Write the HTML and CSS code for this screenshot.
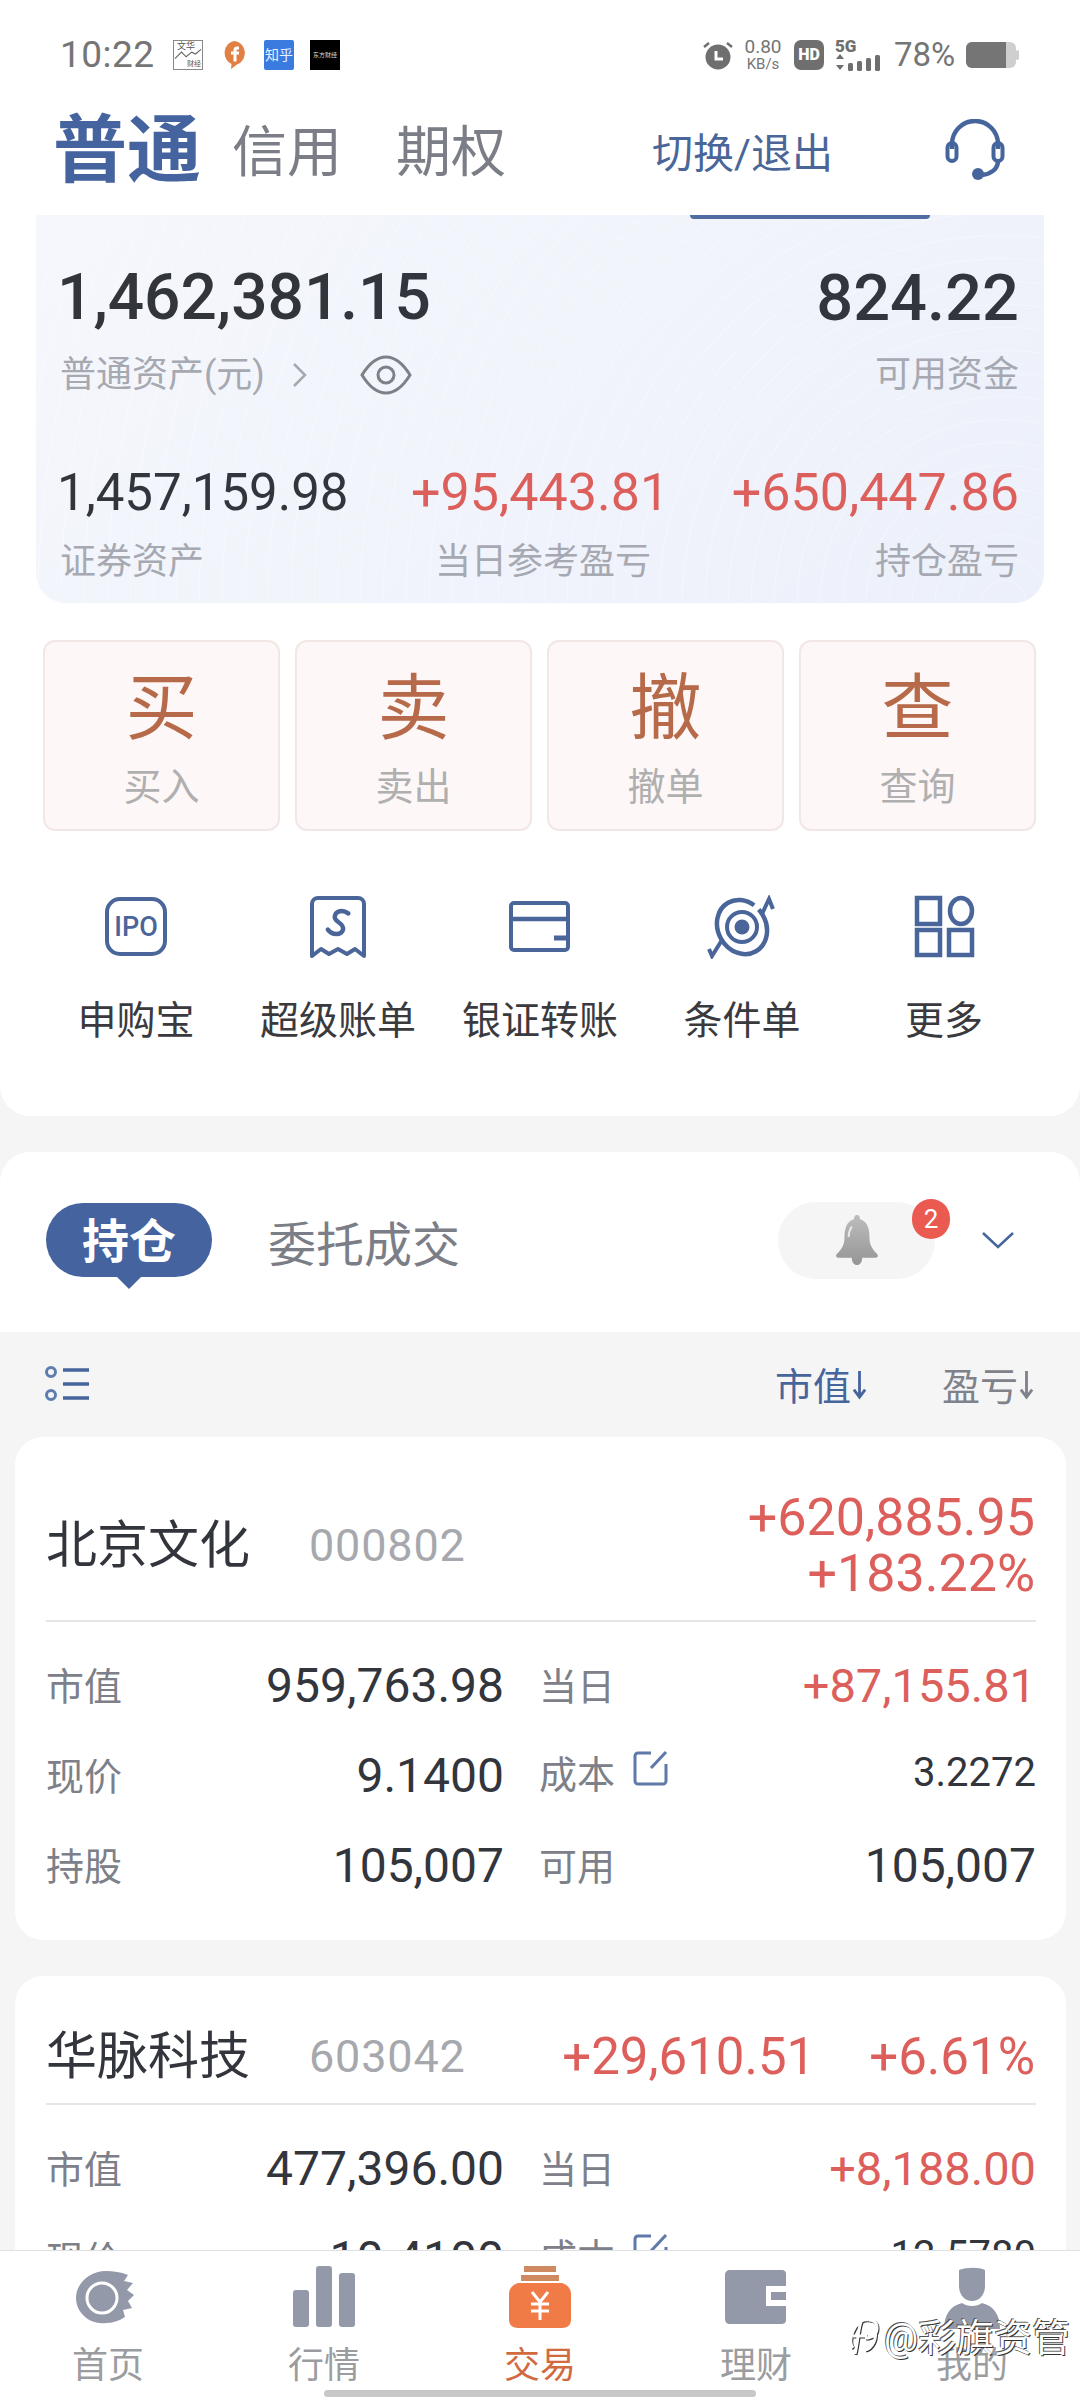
FILE: index.html
```html
<!DOCTYPE html>
<html lang="zh-CN">
<head>
<meta charset="utf-8">
<title>交易</title>
<link rel="stylesheet" href="styles.css">
</head>
<body>
<div class="app">
  <main class="content">
    <section class="top-panel">
      <div class="statusbar">
        <div class="status-left">
          <span class="time">10:22</span>
          <span class="app-ico ico-wh"><span>文华</span><svg viewBox="0 0 30 12" class="wh-line"><path d="M1 11 8 4l5 5 6-5 4 2 6-5" fill="none" stroke="#666" stroke-width="1.2"/></svg><span class="wh-sub">财经</span></span>
          <svg class="app-f" viewBox="0 0 24 30"><path d="M12 1a11 12 0 0 1 3 23.500L9 29l.5-5A11 12 0 0 1 12 1z" fill="#e08044"/><path d="M15.500 6.500c-3 0-4 1.500-4 4v1H9v3h2.500v7h3v-7h2.500v-3h-2.500v-1c0-.8.300-1 1-1h1.500v-3z" fill="#fff"/></svg>
          <span class="app-ico ico-zh">知乎</span>
          <span class="app-ico ico-bk">东方财经</span>
        </div>
        <div class="status-right">
          <svg class="s-alarm" viewBox="0 0 32 30"><circle cx="16" cy="17" r="12.500" fill="#6f6f6f"/><path d="M14 11v8h7" fill="none" stroke="#fff" stroke-width="3"/><path d="M2 7l5-4M30 7l-5-4" stroke="#6f6f6f" stroke-width="2.500"/></svg>
          <span class="s-speed"><span>0.80</span><span>KB/s</span></span>
          <span class="s-hd">HD</span>
          <span class="s-net">
            <span class="s-5g">5G</span>
            <svg viewBox="0 0 50 18" class="s-bars"><path d="M5 1l4 5H1zM5 17l4-5H1z" fill="#6f6f6f"/><rect x="13" y="10" width="5" height="8" rx="1.500" fill="#6f6f6f"/><rect x="22" y="8" width="5" height="10" rx="1.500" fill="#6f6f6f"/><rect x="31" y="5" width="5" height="13" rx="1.500" fill="#6f6f6f"/><rect x="40" y="2" width="5" height="16" rx="1.500" fill="#6f6f6f"/></svg>
          </span>
          <span class="s-batt-text">78%</span>
          <svg class="s-batt" viewBox="0 0 54 28"><rect x="0" y="1" width="50" height="26" rx="6" fill="#cfcfcf"/><path d="M6 1h34v26H6a6 6 0 0 1-6-6V7a6 6 0 0 1 6-6z" fill="#757575"/><rect x="50" y="9" width="3" height="10" rx="1.500" fill="#cfcfcf"/></svg>
        </div>
      </div>

      <header class="account-head">
        <span class="acct-active">普通</span>
        <span class="acct-tab acct-credit">信用</span>
        <span class="acct-tab acct-option">期权</span>
        <span class="acct-switch">切换/退出</span>
        <svg class="headset" viewBox="0 0 60 62"><path d="M7 30V25a23 23 0 0 1 46 0v5" fill="none" stroke="#47659d" stroke-width="4.500"/><rect x="2.500" y="24" width="9" height="18" rx="4.500" fill="none" stroke="#47659d" stroke-width="4"/><rect x="48.500" y="24" width="9" height="18" rx="4.500" fill="none" stroke="#47659d" stroke-width="4"/><path d="M53 42c0 8-7 13-16 14" fill="none" stroke="#47659d" stroke-width="4.500"/><circle cx="33" cy="55" r="6" fill="#47659d"/></svg>
      </header>

      <section class="assets">
        <div class="assets-strip"></div>
        <div class="assets-main">
          <div class="stack">
            <div class="num-xl num-flush">1,462,381.15</div>
            <div class="asset-label asset-link">
              <span>普通资产(元)</span>
              <svg class="chev" viewBox="0 0 18 26"><path d="M3 2l11 11L3 24" fill="none" stroke="#a5a8af" stroke-width="2.500"/></svg>
              <svg class="eye" viewBox="0 0 52 40"><path d="M2 20C10 7 18 2 26 2s16 5 24 18c-8 13-16 18-24 18S10 33 2 20z" fill="none" stroke="#7d8087" stroke-width="3"/><circle cx="26" cy="20" r="8" fill="none" stroke="#7d8087" stroke-width="3"/></svg>
            </div>
          </div>
          <div class="stack stack-end">
            <div class="num-xl num-cash">824.22</div>
            <div class="asset-label">可用资金</div>
          </div>
        </div>
        <div class="assets-sub">
          <div class="stack">
            <div class="num-lg num-dark num-flush">1,457,159.98</div>
            <div class="asset-label">证券资产</div>
          </div>
          <div class="stack stack-center">
            <div class="num-lg up">+95,443.81</div>
            <div class="asset-label label-nudge">当日参考盈亏</div>
          </div>
          <div class="stack stack-end">
            <div class="num-lg up">+650,447.86</div>
            <div class="asset-label">持仓盈亏</div>
          </div>
        </div>
      </section>

      <section class="trade-grid">
        <div class="trade-btn"><span class="trade-big">买</span><span class="trade-sub">买入</span></div>
        <div class="trade-btn"><span class="trade-big">卖</span><span class="trade-sub">卖出</span></div>
        <div class="trade-btn"><span class="trade-big">撤</span><span class="trade-sub">撤单</span></div>
        <div class="trade-btn"><span class="trade-big">查</span><span class="trade-sub">查询</span></div>
      </section>

      <nav class="quick">
        <div class="quick-item">
          <svg class="quick-ico" viewBox="0 0 80 64"><rect x="11" y="4" width="58" height="55" rx="13" fill="none" stroke="#4a6599" stroke-width="4"/><text x="40" y="41" class="ipo-text" text-anchor="middle">IPO</text></svg>
          <span>申购宝</span>
        </div>
        <div class="quick-item">
          <svg class="quick-ico" viewBox="0 0 80 64"><path d="M14 61V9a6 6 0 0 1 6-6h40a6 6 0 0 1 6 6v52l-9-7-8 5-9-5-9 5-8-5z" fill="none" stroke="#4a6599" stroke-width="4" stroke-linejoin="round"/><path d="M49 17c-6-3-13-1-13 5 0 6 11 5 10 12-1 6-10 7-15 2" transform="rotate(8 40 27)" fill="none" stroke="#4a6599" stroke-width="4.500" stroke-linecap="round"/></svg>
          <span>超级账单</span>
        </div>
        <div class="quick-item">
          <svg class="quick-ico" viewBox="0 0 80 64"><rect x="11" y="8" width="57" height="47" rx="3" fill="none" stroke="#4a6599" stroke-width="4"/><path d="M11 24h57" stroke="#4a6599" stroke-width="4.500"/><path d="M54 43h14" stroke="#4a6599" stroke-width="5"/></svg>
          <span>银证转账</span>
        </div>
        <div class="quick-item">
          <svg class="quick-ico" viewBox="0 0 80 64"><ellipse cx="40" cy="32" rx="24" ry="28" fill="none" stroke="#4a6599" stroke-width="4.500" stroke-dasharray="150 6" transform="rotate(-30 40 32)"/><circle cx="40" cy="32" r="15" fill="none" stroke="#4a6599" stroke-width="4"/><circle cx="40" cy="32" r="7.500" fill="#4a6599"/><path d="M60 19l7-15 4 10M20 45L10 61l-3-7" fill="none" stroke="#4a6599" stroke-width="4"/></svg>
          <span>条件单</span>
        </div>
        <div class="quick-item">
          <svg class="quick-ico" viewBox="0 0 80 64"><rect x="13" y="3" width="23" height="26" fill="none" stroke="#4a6599" stroke-width="4.500"/><ellipse cx="57" cy="16" rx="11" ry="13" fill="none" stroke="#4a6599" stroke-width="4.500"/><rect x="13" y="35" width="23" height="25" fill="none" stroke="#4a6599" stroke-width="4.500"/><rect x="45" y="35" width="23" height="25" fill="none" stroke="#4a6599" stroke-width="4.500"/></svg>
          <span>更多</span>
        </div>
      </nav>
    </section>

    <section class="tabs">
      <span class="tab-pill">持仓</span>
      <span class="tab-other">委托成交</span>
      <span class="bell-pill">
        <svg class="bell" viewBox="0 0 50 50"><defs><linearGradient id="bellg" x1="0" y1="0" x2="0" y2="1"><stop offset="0" stop-color="#bdbdbd"/><stop offset="1" stop-color="#959595"/></linearGradient></defs><path d="M25 1c2 0 3 2 3 4 7 2 9 9 9 17 0 7 2 11 7 16 2 2 1 4-1 4H30c0 4-2 7-5 7s-5-3-5-7H7c-2 0-3-2-1-4 5-5 7-9 7-16 0-8 2-15 9-17 0-2 1-4 3-4z" fill="url(#bellg)"/><path d="M20 12c-2 3-3 6-3 10" stroke="#e8e8e8" stroke-width="2" fill="none"/></svg>
        <span class="badge">2</span>
      </span>
      <svg class="tab-chev" viewBox="0 0 32 18"><path d="M1 2l15 14L31 2" fill="none" stroke="#47659d" stroke-width="2.500"/></svg>
    </section>

    <section class="list-head">
      <svg class="list-ico" viewBox="0 0 44 36"><circle cx="6" cy="6" r="4.500" fill="none" stroke="#5f7cb0" stroke-width="3"/><circle cx="6" cy="29" r="4.500" fill="none" stroke="#5f7cb0" stroke-width="3"/><path d="M18 4h26M18 18h26M18 32h26" stroke="#47659d" stroke-width="3.500"/></svg>
      <span class="sort sort-on">市值<svg class="sort-arrow" viewBox="0 0 16 34"><path d="M8 3v27M2 23l6 8 6-8" fill="none" stroke="#47659d" stroke-width="3"/></svg></span>
      <span class="sort sort-off">盈亏<svg class="sort-arrow" viewBox="0 0 16 34"><path d="M8 3v27M2 23l6 8 6-8" fill="none" stroke="#7f828a" stroke-width="3"/></svg></span>
    </section>

    <section class="cards">
      <article class="card">
        <div class="card-head">
          <span class="stock-name">北京文化</span>
          <span class="stock-code">000802</span>
          <div class="profit-stack up">
            <div>+620,885.95</div>
            <div>+183.22%</div>
          </div>
        </div>
        <div class="card-grid">
          <div class="cell"><span class="cell-label">市值</span><span class="cell-val">959,763.98</span></div>
          <div class="cell"><span class="cell-label">当日</span><span class="cell-val up">+87,155.81</span></div>
          <div class="cell"><span class="cell-label">现价</span><span class="cell-val">9.1400</span></div>
          <div class="cell"><span class="cell-label cell-edit">成本<svg class="edit" viewBox="0 0 36 36"><path d="M18 3H5a3 3 0 0 0-3 3v25a3 3 0 0 0 3 3h25a3 3 0 0 0 3-3V14" fill="none" stroke="#5f7aa8" stroke-width="3"/><path d="M18 18L33 2" stroke="#5f7aa8" stroke-width="3"/></svg></span><span class="cell-val cell-small">3.2272</span></div>
          <div class="cell"><span class="cell-label">持股</span><span class="cell-val">105,007</span></div>
          <div class="cell"><span class="cell-label">可用</span><span class="cell-val">105,007</span></div>
        </div>
      </article>

      <article class="card">
        <div class="card-head">
          <span class="stock-name">华脉科技</span>
          <span class="stock-code">603042</span>
          <div class="profit-row up">
            <span>+29,610.51</span>
            <span>+6.61%</span>
          </div>
        </div>
        <div class="card-grid">
          <div class="cell"><span class="cell-label">市值</span><span class="cell-val">477,396.00</span></div>
          <div class="cell"><span class="cell-label">当日</span><span class="cell-val up">+8,188.00</span></div>
          <div class="cell"><span class="cell-label">现价</span><span class="cell-val">10.4100</span></div>
          <div class="cell"><span class="cell-label cell-edit">成本<svg class="edit" viewBox="0 0 36 36"><path d="M18 3H5a3 3 0 0 0-3 3v25a3 3 0 0 0 3 3h25a3 3 0 0 0 3-3V14" fill="none" stroke="#5f7aa8" stroke-width="3"/><path d="M18 18L33 2" stroke="#5f7aa8" stroke-width="3"/></svg></span><span class="cell-val cell-small">12.5780</span></div>
        </div>
      </article>
    </section>
  </main>

  <nav class="tabbar">
    <div class="tabbar-item">
      <svg viewBox="0 0 80 64"><path d="M38 6c8 0 14 1 22 4l-4 6 9 2-6 7 7 5-6 6 4 7-9 2 2 7c-6 4-13 6-19 6C22 60 8 48 8 33S22 6 38 6z" fill="#9399a8"/><circle cx="34" cy="33" r="15" fill="none" stroke="#fff" stroke-width="3"/></svg>
      <span>首页</span>
    </div>
    <div class="tabbar-item">
      <svg viewBox="0 0 80 64"><rect x="9" y="25" width="16" height="37" rx="3" fill="#9399a8"/><rect x="32" y="1" width="16" height="61" rx="3" fill="#9399a8"/><rect x="55" y="8" width="16" height="54" rx="3" fill="#9399a8"/></svg>
      <span>行情</span>
    </div>
    <div class="tabbar-item tabbar-on">
      <svg viewBox="0 0 80 64"><path d="M24 1h32v6H24zM21 10h38v6H21z" fill="#d08a62"/><path d="M18 18h44c6 2 9 6 9 11v26c0 5-4 8-9 8H18c-5 0-9-3-9-8V29c0-5 3-9 9-11z" fill="#f17b47"/><path d="M32 27l8 10 8-10M31 39h18M31 46h18M40 37v18" fill="none" stroke="#fff" stroke-width="3"/></svg>
      <span>交易</span>
    </div>
    <div class="tabbar-item">
      <svg viewBox="0 0 80 64"><path d="M14 5h52c3 0 4 2 4 4v12H50v20h20v14c0 3-2 4-5 4H14c-3 0-5-2-5-5V10c0-3 2-5 5-5z" fill="#9399a8"/><rect x="55" y="27" width="15" height="8" fill="#9399a8"/></svg>
      <span>理财</span>
    </div>
    <div class="tabbar-item">
      <svg viewBox="0 0 80 64"><path d="M27 5c8-3 20-3 26 0v16c0 9-6 15-13 15s-13-6-13-15z" fill="#9399a8"/><path d="M12 64c0-14 6-23 18-26 5 4 15 4 20 0 12 3 18 12 18 26z" fill="#9399a8"/></svg>
      <span>我的</span>
    </div>
  </nav>

  <div class="watermark">
    <svg class="wm-logo" viewBox="0 0 36 44"><path d="M24 4C15 2 8 12 6 22c-1 6 2 10 2 10M16 6c-3 8-3 20-6 32M20 22c8 0 12-4 12-10s-4-8-8-8M30 14c2 8-2 18-10 20" fill="none" stroke="#fff" stroke-width="3"/><path d="M8 20h14" stroke="#fff" stroke-width="3"/></svg>
    <span>@彩旗资管</span>
  </div>
  <div class="home-bar"></div>
</div>
</body>
</html>
```

FILE: styles.css
```css
* { box-sizing: border-box; }
html, body { margin: 0; padding: 0; }
body {
  width: 1080px;
  height: 2400px;
  background: #f5f5f6;
  font-family: Roboto, "Noto Sans CJK SC", sans-serif;
  color: #33353c;
}
.app {
  position: relative;
  width: 1080px;
  height: 2400px;
  display: flex;
  flex-direction: column;
  overflow: hidden;
}
.content { flex: 1; min-height: 0; overflow: hidden; }
.up { color: #dd5f5c; }

/* top panel */
.top-panel {
  background: #fff;
  border-radius: 0 0 30px 30px;
  padding-bottom: 70px;
}
.statusbar {
  height: 85px;
  padding: 24px 60px 0;
  display: flex;
  justify-content: space-between;
  align-items: center;
  color: #757575;
}
.status-left, .status-right { display: flex; align-items: center; }
.time { font-size: 37px; width: 113px; letter-spacing: .5px; }
.app-ico {
  width: 30px;
  height: 30px;
  display: block;
  font-size: 11px;
  line-height: 30px;
  text-align: center;
  overflow: hidden;
  white-space: nowrap;
}
.ico-wh {
  position: relative;
  border: 1px solid #888;
  background: #fff;
  color: #555;
  font-size: 9px;
  line-height: 11px;
  text-align: left;
  padding-left: 3px;
}
.ico-wh span { display: block; }
.wh-line { position: absolute; left: 0; top: 7px; width: 28px; height: 12px; }
.wh-sub { position: absolute; right: 1px; bottom: 0; font-size: 7px; line-height: 9px; }
.app-f { width: 24px; height: 30px; margin-left: 19px; }
.ico-zh { margin-left: 18px; background: #3a7be0; color: #e6f0ff; font-size: 14px; border-radius: 2px; }
.ico-bk { margin-left: 16px; background: #000; color: #ddd; font-size: 6px; }
.s-alarm { width: 32px; height: 30px; }
.s-speed {
  display: flex;
  flex-direction: column;
  align-items: center;
  width: 38px;
  margin-left: 10px;
}
.s-speed span:first-child { font-size: 19px; line-height: 19px; }
.s-speed span:last-child { font-size: 15px; line-height: 16px; }
.s-hd {
  width: 30px;
  height: 30px;
  margin-left: 12px;
  background: #6f6f6f;
  color: #fff;
  border-radius: 7px;
  font-size: 16px;
  font-weight: 900;
  line-height: 30px;
  text-align: center;
}
.s-net { width: 50px; margin-left: 11px; display: flex; flex-direction: column; height: 32px; }
.s-5g { font-size: 17px; font-weight: 900; line-height: 14px; color: #6f6f6f; }
.s-bars { width: 50px; height: 18px; }
.s-batt-text { font-size: 33px; margin-left: 9px; width: 64px; }
.s-batt { width: 54px; height: 28px; margin-left: 8px; }

.account-head {
  height: 130px;
  padding: 0 75px 0 53px;
  display: flex;
  align-items: center;
}
.acct-active { font-size: 74px; font-weight: 700; color: #44639f; line-height: 1; margin-top: 2px; }
.acct-tab { font-size: 55px; color: #7b7e86; line-height: 1; margin-top: 4px; }
.acct-credit { margin-left: 31px; }
.acct-option { margin-left: 54px; }
.acct-switch { margin-left: auto; font-size: 41px; color: #4a6699; white-space: nowrap; margin-top: -1px; }
.headset { width: 60px; height: 62px; margin-left: 112px; }

/* assets */
.assets {
  margin: 0 36px;
  height: 388px;
  padding: 0 25px 0 24px;
  border-radius: 0 0 30px 30px;
  background:
    repeating-radial-gradient(circle at 96% 100%, rgba(255,255,255,0) 0 22px, rgba(255,255,255,.3) 22px 23px),
    linear-gradient(135deg, #f5f7fc 0%, #f0f3fb 60%, #ecf0fa 100%);
}
.assets-strip {
  width: 240px;
  height: 4px;
  margin-left: 630px;
  background: #4f6ca3;
  border-radius: 0 0 6px 6px;
}
.assets-main { display: flex; justify-content: space-between; padding-top: 44px; }
.assets-sub { display: flex; justify-content: space-between; margin-top: 63px; }
.stack { display: flex; flex-direction: column; }
.stack-end { align-items: flex-end; }
.stack-center { align-items: center; }
.num-xl { font-size: 64px; font-weight: 500; line-height: 70px; color: #33353d; }
.num-cash { font-size: 65px; }
.num-flush { margin-left: -3px; }
.num-lg { font-size: 52px; line-height: 60px; }
.num-dark { font-size: 51px; }
.assets-main .asset-label { margin-top: 17px; }
.assets-sub .asset-label { margin-top: 14px; }
.asset-label { font-size: 36px; line-height: 50px; color: #a6a9b1; white-space: nowrap; }
.assets-sub .label-nudge { margin-left: 6px; }
.asset-link { display: flex; align-items: center; }
.chev { width: 18px; height: 26px; margin-left: 26px; }
.eye { width: 52px; height: 40px; margin-left: 51px; }

/* trade */
.trade-grid {
  display: grid;
  grid-template-columns: repeat(4, 1fr);
  gap: 15px;
  padding: 37px 44px 0 43px;
}
.trade-btn {
  height: 191px;
  padding-top: 26px;
  display: flex;
  flex-direction: column;
  align-items: center;
  background: #fdf7f7;
  border: 2px solid #f3e7e6;
  border-radius: 12px;
}
.trade-big { font-size: 72px; line-height: 80px; color: #b76a4a; margin-top: 1px; }
.trade-sub { font-size: 38px; line-height: 48px; margin-top: 14px; color: #b0afaf; }

/* quick */
.quick {
  display: grid;
  grid-template-columns: repeat(5, 202px);
  padding: 64px 0 0 35px;
}
.quick-item {
  display: flex;
  flex-direction: column;
  align-items: center;
  font-size: 39px;
  line-height: 50px;
  color: #3a3a3e;
  white-space: nowrap;
}
.quick-item span { margin-top: 37px; }
.quick-ico { width: 80px; height: 64px; display: block; }
.ipo-text { font-family: Roboto, sans-serif; font-size: 27px; font-weight: 500; fill: #4a6599; }

/* tabs */
.tabs {
  margin-top: 36px;
  height: 180px;
  padding: 0 66px 4px 46px;
  background: #fff;
  border-radius: 30px 30px 0 0;
  display: flex;
  align-items: center;
}
.tab-pill {
  position: relative;
  width: 166px;
  height: 74px;
  border-radius: 37px;
  background: #44639f;
  color: #fff;
  font-size: 47px;
  font-weight: 700;
  line-height: 78px;
  text-align: center;
}
.tab-pill::after {
  content: "";
  position: absolute;
  left: 70px;
  top: 73px;
  border: 13px solid transparent;
  border-top-color: #44639f;
  border-bottom: 0;
}
.tab-other { margin: 2px 0 0 56px; font-size: 48px; color: #7b7e86; }
.bell-pill {
  position: relative;
  margin-left: auto;
  width: 157px;
  height: 77px;
  border-radius: 38px;
  background: #f5f5f5;
  display: flex;
  align-items: center;
  justify-content: center;
}
.bell { width: 52px; height: 52px; }
.badge {
  position: absolute;
  right: -15px;
  top: -3px;
  width: 38px;
  height: 40px;
  border-radius: 20px;
  background: #ea5a50;
  color: #fff;
  font-size: 26px;
  line-height: 40px;
  text-align: center;
}
.tab-chev { width: 32px; height: 18px; margin-left: 47px; }

/* list head */
.list-head {
  height: 105px;
  padding: 0 46px 2px 45px;
  display: flex;
  align-items: center;
}
.list-ico { width: 44px; height: 36px; margin-right: auto; }
.sort { font-size: 38px; white-space: nowrap; display: flex; align-items: center; }
.sort-arrow { width: 15px; height: 34px; margin-left: 1px; }
.sort-on { color: #47659d; }
.sort-off { margin-left: 75px; color: #7f828a; }

/* cards */
.cards {
  padding: 0 14px 0 15px;
  display: flex;
  flex-direction: column;
  gap: 36px;
}
.card {
  background: #fff;
  border-radius: 28px;
  padding: 0 30px 30px 31px;
}
.card-head {
  padding: 53px 0 18px;
  border-bottom: 2px solid #e6e6e8;
  display: flex;
  align-items: center;
}
.stock-name { font-size: 51px; line-height: 56px; color: #33353c; white-space: nowrap; }
.stock-code { margin-left: 59px; font-size: 45px; line-height: 56px; letter-spacing: .8px; color: #a6a8ae; }
.profit-stack {
  margin-left: auto;
  font-size: 52px;
  line-height: 56px;
  text-align: right;
  margin-right: 1px;
}
.profit-row {
  margin-left: auto;
  display: flex;
  gap: 54px;
  font-size: 51px;
  line-height: 56px;
  margin-right: 1px;
}
.card-grid {
  display: grid;
  grid-template-columns: 458px 1fr;
  column-gap: 35px;
  padding-top: 18px;
}
.cell {
  height: 90px;
  display: flex;
  align-items: center;
  justify-content: space-between;
}
.cell-label { font-size: 38px; color: #7d8088; white-space: nowrap; margin-top: -4px; }
.cell-edit { margin-top: -8px; display: flex; align-items: center; }
.edit { width: 36px; height: 36px; margin-left: 18px; margin-top: -6px; }
.cell-val { font-size: 48px; color: #33353c; }
.cell-val.up { font-size: 47px; color: #dd5f5c; }
.cell-small { font-size: 40px; margin-top: -6px; }

/* tab bar */
.tabbar {
  height: 150px;
  flex: none;
  background: #fff;
  border-top: 1px solid #dfe0e2;
  padding-top: 14px;
  display: grid;
  grid-template-columns: repeat(5, 216px);
}
.tabbar-item {
  display: flex;
  flex-direction: column;
  align-items: center;
  font-size: 36px;
  line-height: 48px;
  color: #9b9c9f;
}
.tabbar-item svg { width: 80px; height: 64px; display: block; }
.tabbar-item span { margin-top: 13px; }
.tabbar-on { color: #d26a3f; }

.watermark {
  position: absolute;
  left: 845px;
  top: 2313px;
  display: flex;
  align-items: center;
  color: #fff;
  font-size: 38px;
  line-height: 50px;
  white-space: nowrap;
  text-shadow: 1px 1px 0 #333, -1px -1px 0 #555;
}
.wm-logo { width: 36px; height: 44px; margin-right: 3px; filter: drop-shadow(1px 1px 0 #333); }
.home-bar {
  position: absolute;
  left: 324px;
  top: 2390px;
  width: 432px;
  height: 7px;
  border-radius: 4px;
  background: #c8c8c8;
}
```
